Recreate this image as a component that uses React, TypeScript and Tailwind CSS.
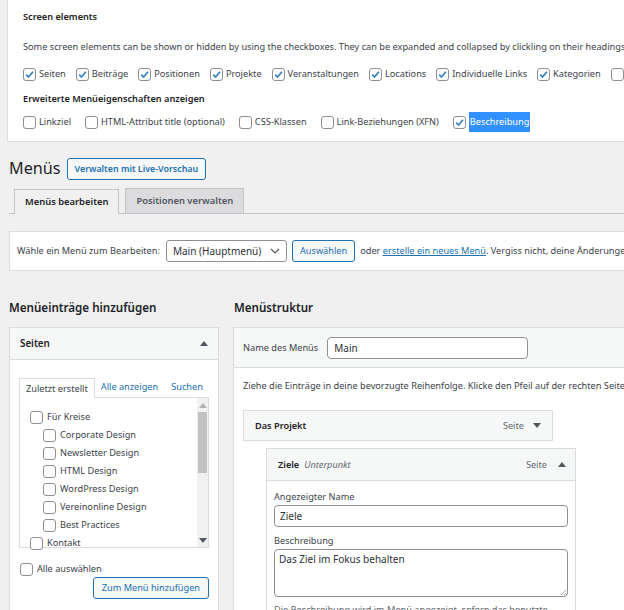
import React from "react";

function Box({ checked }: { checked?: boolean }) {
  return (
    <span className="flex h-[13px] w-[13px] shrink-0 items-center justify-center rounded-[3px] border border-[#8c8f94] bg-white">
      {checked && (
        <svg viewBox="0 0 11 11" className="h-[11px] w-[11px]">
          <path d="M2.2 5.6l2.3 2.4L9 2.8" fill="none" stroke="#3582c4" strokeWidth="1.7" />
        </svg>
      )}
    </span>
  );
}

function Check({ label, checked, hl }: { label?: string; checked?: boolean; hl?: boolean }) {
  return (
    <label className="flex shrink-0 items-center gap-[3px] whitespace-nowrap">
      <Box checked={checked} />
      {label && <span className={hl ? "bg-[#3390ff] px-px py-[3px] text-white" : ""}>{label}</span>}
    </label>
  );
}

function Tri({ up, className }: { up?: boolean; className?: string }) {
  return (
    <svg viewBox="0 0 8 5" className={"h-[5px] w-[8px] " + (className ?? "")}>
      <path d={up ? "M0 5L4 0l4 5z" : "M0 0h8L4 5z"} fill="#50575e" />
    </svg>
  );
}

const btn =
  "flex h-[22px] items-center rounded-[3px] border border-[#2271b1] bg-[#f6f7f7] px-[7px] text-[#2271b1] whitespace-nowrap";

const pages: [string, number][] = [
  ["Für Kreise", 0],
  ["Corporate Design", 1],
  ["Newsletter Design", 1],
  ["HTML Design", 1],
  ["WordPress Design", 1],
  ["Vereinonline Design", 1],
  ["Best Practices", 1],
  ["Kontakt", 0],
];

export default function App() {
  return (
    <div className="h-[610px] w-[624px] overflow-hidden bg-[#f0f0f1] font-['Noto_Sans',sans-serif] text-[9.2px] leading-[14px] text-[#3c434a]">
      {/* screen options */}
      <div className="ml-[7px] h-[142px] border-b border-l border-[#dcdcde] bg-white pl-[15px]">
        <div className="pt-[10px] font-semibold text-[#1d2327]">Screen elements</div>
        <div className="mt-[16px] whitespace-nowrap">
          Some screen elements can be shown or hidden by using the checkboxes. They can be expanded and collapsed by clickling on their headings
        </div>
        <div className="mt-[12px] flex h-[16px] items-center gap-x-[10px]">
          <Check label="Seiten" checked />
          <Check label="Beiträge" checked />
          <Check label="Positionen" checked />
          <Check label="Projekte" checked />
          <Check label="Veranstaltungen" checked />
          <Check label="Locations" checked />
          <Check label="Individuelle Links" checked />
          <Check label="Kategorien" checked />
          <Check />
        </div>
        <div className="mt-[10px] font-semibold text-[#1d2327]">Erweiterte Menüeigenschaften anzeigen</div>
        <div className="mt-[8px] flex h-[16px] items-center gap-x-[14px]">
          <Check label="Linkziel" />
          <Check label="HTML-Attribut title (optional)" />
          <Check label="CSS-Klassen" />
          <Check label="Link-Beziehungen (XFN)" />
          <Check label="Beschreibung" checked hl />
        </div>
      </div>

      {/* title */}
      <div className="ml-[9px] mt-[16px] flex h-[21px] items-center gap-[6px]">
        <h1 className="text-[16.2px] leading-none text-[#1d2327]">Menüs</h1>
        <span className={btn + " h-[21px] px-[6px] text-[8.9px] font-semibold"}>Verwalten mit Live-Vorschau</span>
      </div>

      {/* tabs */}
      <div className="ml-[9px] mt-[10px] flex h-[25px] items-end gap-[6px] border-b border-[#c3c4c7] pl-[5px]">
        <div className="-mb-px flex h-[25px] items-center border border-b-0 border-[#c3c4c7] bg-[#f0f0f1] px-[10px] text-[9.4px] font-semibold text-[#1d2327]">
          Menüs bearbeiten
        </div>
        <div className="flex h-[25px] items-center border border-b-0 border-[#c3c4c7] bg-[#dcdcde] px-[10px] text-[9.4px] font-semibold text-[#50575e]">
          Positionen verwalten
        </div>
      </div>

      {/* select menu */}
      <div className="ml-[9px] mt-[17px] flex h-[40px] items-center gap-[5px] whitespace-nowrap border border-r-0 border-[#dcdcde] bg-white pl-[7px]">
        <span className="mr-px">Wähle ein Menü zum Bearbeiten:</span>
        <span className="flex h-[22px] w-[121px] shrink-0 items-center justify-between rounded-[3px] border border-[#8c8f94] bg-white pl-[6px] pr-[6px] text-[10px] text-[#2c3338]">
          Main (Hauptmenü)
          <svg viewBox="0 0 10 6" className="h-[6px] w-[10px]">
            <path d="M1 1l4 4 4-4" fill="none" stroke="#50575e" strokeWidth="1.2" />
          </svg>
        </span>
        <span className={btn}>Auswählen</span>
        <span>
          oder <span className="text-[#2271b1] underline">erstelle ein neues Menü</span>. Vergiss nicht, deine Änderungen
        </span>
      </div>

      {/* columns */}
      <div className="ml-[9px] mt-[28px] flex gap-[14px]">
        {/* left */}
        <div className="w-[210px] shrink-0">
          <h2 className="h-[18px] text-[11.6px] font-semibold leading-[18px] text-[#1d2327]">Menüeinträge hinzufügen</h2>
          <div className="mt-[10px] h-[300px] border border-[#dcdcde] bg-white">
            <div className="flex h-[32px] items-center justify-between border-b border-[#dcdcde] bg-[#f6f7f7] pl-[10px] pr-[10px]">
              <span className="text-[9.8px] font-semibold text-[#1d2327]">Seiten</span>
              <Tri up />
            </div>
            <div className="px-[9px] pt-[17px]">
              <div className="flex h-[20px] items-end">
                <div className="-mb-px flex h-[20px] items-center border border-b-0 border-[#dcdcde] bg-white px-[6px]">
                  Zuletzt erstellt
                </div>
                <span className="mb-[3px] ml-[6px] text-[#2271b1]">Alle anzeigen</span>
                <span className="mb-[3px] ml-[13px] text-[#2271b1]">Suchen</span>
              </div>
              <div className="flex h-[151px] border border-[#dcdcde] bg-white">
                <div className="flex-1 pl-[10px] pt-[10px]">
                  {pages.map(([p, lvl]) => (
                    <div key={p} className={"flex h-[18px] items-center gap-[4px] " + (lvl ? "pl-[13px]" : "")}>
                      <Box />
                      <span>{p}</span>
                    </div>
                  ))}
                </div>
                <div className="flex w-[11px] flex-col items-center bg-[#f1f1f1] pt-[5px]">
                  <Tri up className="h-[4px] w-[6px] opacity-40" />
                  <div className="mt-[4px] h-[61px] w-[9px] bg-[#c1c1c1]" />
                  <div className="flex-1" />
                  <Tri className="mb-[4px] h-[4px] w-[6px]" />
                </div>
              </div>
              <div className="mt-[14px] flex h-[14px] items-center gap-[4px] pl-px">
                <Box />
                <span>Alle auswählen</span>
              </div>
              <div className="mt-[1px] flex justify-end">
                <span className={btn + " h-[22px] px-[8px]"}>Zum Menü hinzufügen</span>
              </div>
            </div>
          </div>
        </div>

        {/* right */}
        <div className="w-[500px] shrink-0">
          <h2 className="h-[18px] pl-px text-[11.6px] font-semibold leading-[18px] text-[#1d2327]">Menüstruktur</h2>
          <div className="mt-[10px] h-[300px] border border-r-0 border-[#dcdcde] bg-white">
            <div className="flex h-[40px] items-center gap-[9px] border-b border-[#dcdcde] bg-[#f6f7f7] pl-[9px]">
              <span>Name des Menüs</span>
              <span className="flex h-[22px] w-[201px] items-center rounded-[4px] border border-[#8c8f94] bg-white pl-[6px] text-[10px] text-[#2c3338]">
                Main
              </span>
            </div>
            <div className="pl-[9px] pt-[11px]">
              <div className="whitespace-nowrap">
                Ziehe die Einträge in deine bevorzugte Reihenfolge. Klicke den Pfeil auf der rechten Seite,
              </div>
              <div className="mt-[17px] flex h-[31px] w-[310px] items-center justify-between border border-[#dcdcde] bg-[#f6f7f7] pl-[11px] pr-[11px]">
                <span className="font-semibold text-[#1d2327]">Das Projekt</span>
                <span className="flex items-center gap-[9px] text-[#646970]">
                  Seite
                  <Tri />
                </span>
              </div>
              <div className="ml-[23px] mt-[7px] w-[310px] border border-[#dcdcde]">
                <div className="flex h-[32px] items-center justify-between border-b border-[#dcdcde] bg-[#f6f7f7] pl-[11px] pr-[9px]">
                  <span className="flex items-center gap-[5px]">
                    <span className="font-semibold text-[#1d2327]">Ziele</span>
                    <span className="italic text-[#646970]">Unterpunkt</span>
                  </span>
                  <span className="flex items-center gap-[11px] text-[#646970]">
                    Seite
                    <Tri up />
                  </span>
                </div>
                <div className="bg-white px-[7px] pt-[9px]">
                  <div>Angezeigter Name</div>
                  <div className="mt-[1px] flex h-[22px] items-center rounded-[4px] border border-[#8c8f94] bg-white pl-[5px] text-[10px] text-[#2c3338]">
                    Ziele
                  </div>
                  <div className="mt-[7px]">Beschreibung</div>
                  <div className="relative mt-[1px] h-[48px] rounded-[4px] border border-[#8c8f94] bg-white pl-[4px] pt-[2px] text-[10px] text-[#2c3338]">
                    Das Ziel im Fokus behalten
                    <svg viewBox="0 0 6 6" className="absolute bottom-[1px] right-[1px] h-[6px] w-[6px]">
                      <path d="M6 1L1 6M6 4L4 6" stroke="#8c8f94" strokeWidth="0.8" />
                    </svg>
                  </div>
                  <div className="mt-[6px] whitespace-nowrap text-[#646970]">
                    Die Beschreibung wird im Menü angezeigt, sofern das benutzte
                  </div>
                </div>
              </div>
            </div>
          </div>
        </div>
      </div>
    </div>
  );
}
